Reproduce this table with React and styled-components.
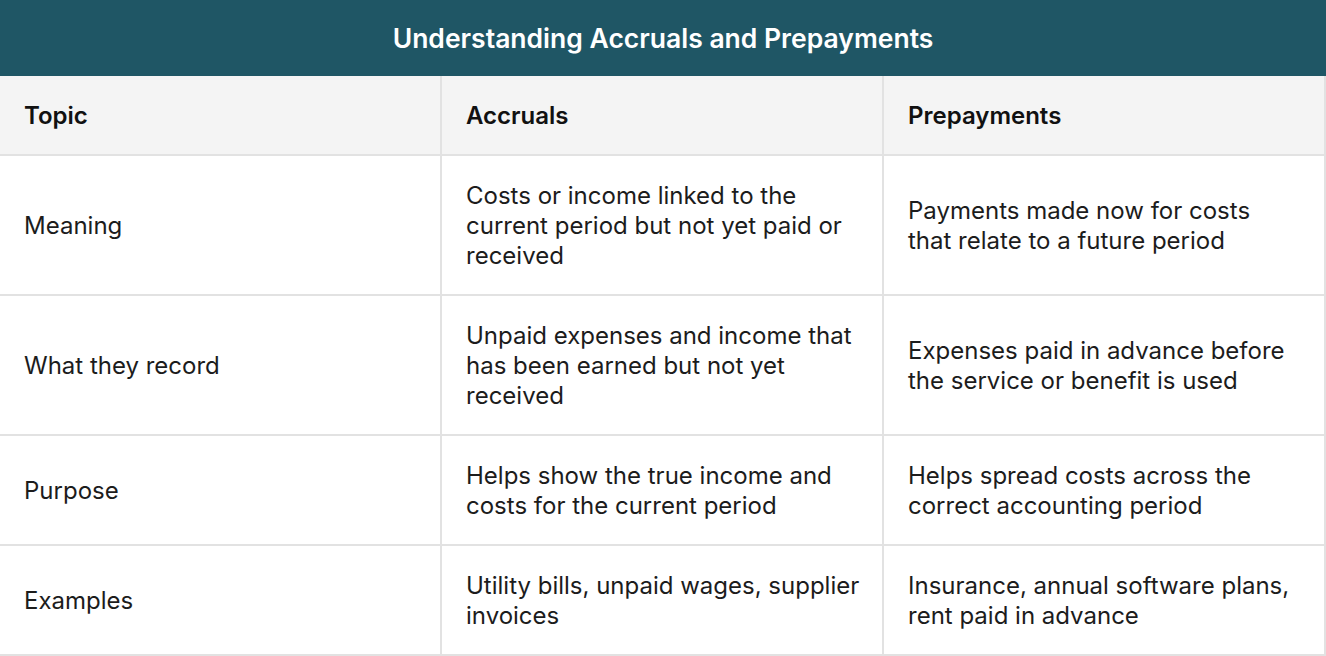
import React from "react";
import styled, { createGlobalStyle } from "styled-components";

const GlobalStyle = createGlobalStyle`
  body {
    margin: 0;
    background: #fff;
    font-family: Inter, "Liberation Sans", sans-serif;
  }
`;

const Wrapper = styled.div`
  width: 1326px;
`;

const TitleBar = styled.div`
  height: 76px;
  background-color: #1f5665;
  color: #fff;
  display: flex;
  align-items: center;
  justify-content: center;
  font-size: 26.5px;
  font-weight: 600;
`;

const Grid = styled.div`
  display: grid;
  grid-template-columns: 442px 442px 442px;
`;

const Cell = styled.div`
  box-sizing: border-box;
  display: flex;
  align-items: center;
  padding: 25px ${(p) => (p.$last ? "26px" : "16px")} 23px 24px;
  border-right: 2px solid #e2e2e2;
  border-bottom: 2px solid #e2e2e2;
  background-color: ${(p) => (p.$head ? "#f4f4f4" : "#fff")};
  color: ${(p) => (p.$head ? "#111" : "#1c1c1c")};
  font-size: 24px;
  line-height: 30px;
  font-weight: ${(p) => (p.$head ? 600 : 400)};
`;

const headers = ["Topic", "Accruals", "Prepayments"];

const rows = [
  [
    "Meaning",
    "Costs or income linked to the current period but not yet paid or received",
    "Payments made now for costs that relate to a future period",
  ],
  [
    "What they record",
    "Unpaid expenses and income that has been earned but not yet received",
    "Expenses paid in advance before the service or benefit is used",
  ],
  [
    "Purpose",
    "Helps show the true income and costs for the current period",
    "Helps spread costs across the correct accounting period",
  ],
  [
    "Examples",
    "Utility bills, unpaid wages, supplier invoices",
    "Insurance, annual software plans, rent paid in advance",
  ],
];

const App = () => {
  return (
    <Wrapper>
      <GlobalStyle />
      <TitleBar>Understanding Accruals and Prepayments</TitleBar>
      <Grid>
        {headers.map((h, i) => (
          <Cell key={h} $head $last={i === 2}>
            {h}
          </Cell>
        ))}
        {rows.map((row) =>
          row.map((text, i) => (
            <Cell key={row[0] + i} $last={i === 2}>
              {text}
            </Cell>
          ))
        )}
      </Grid>
    </Wrapper>
  );
};

export default App;
